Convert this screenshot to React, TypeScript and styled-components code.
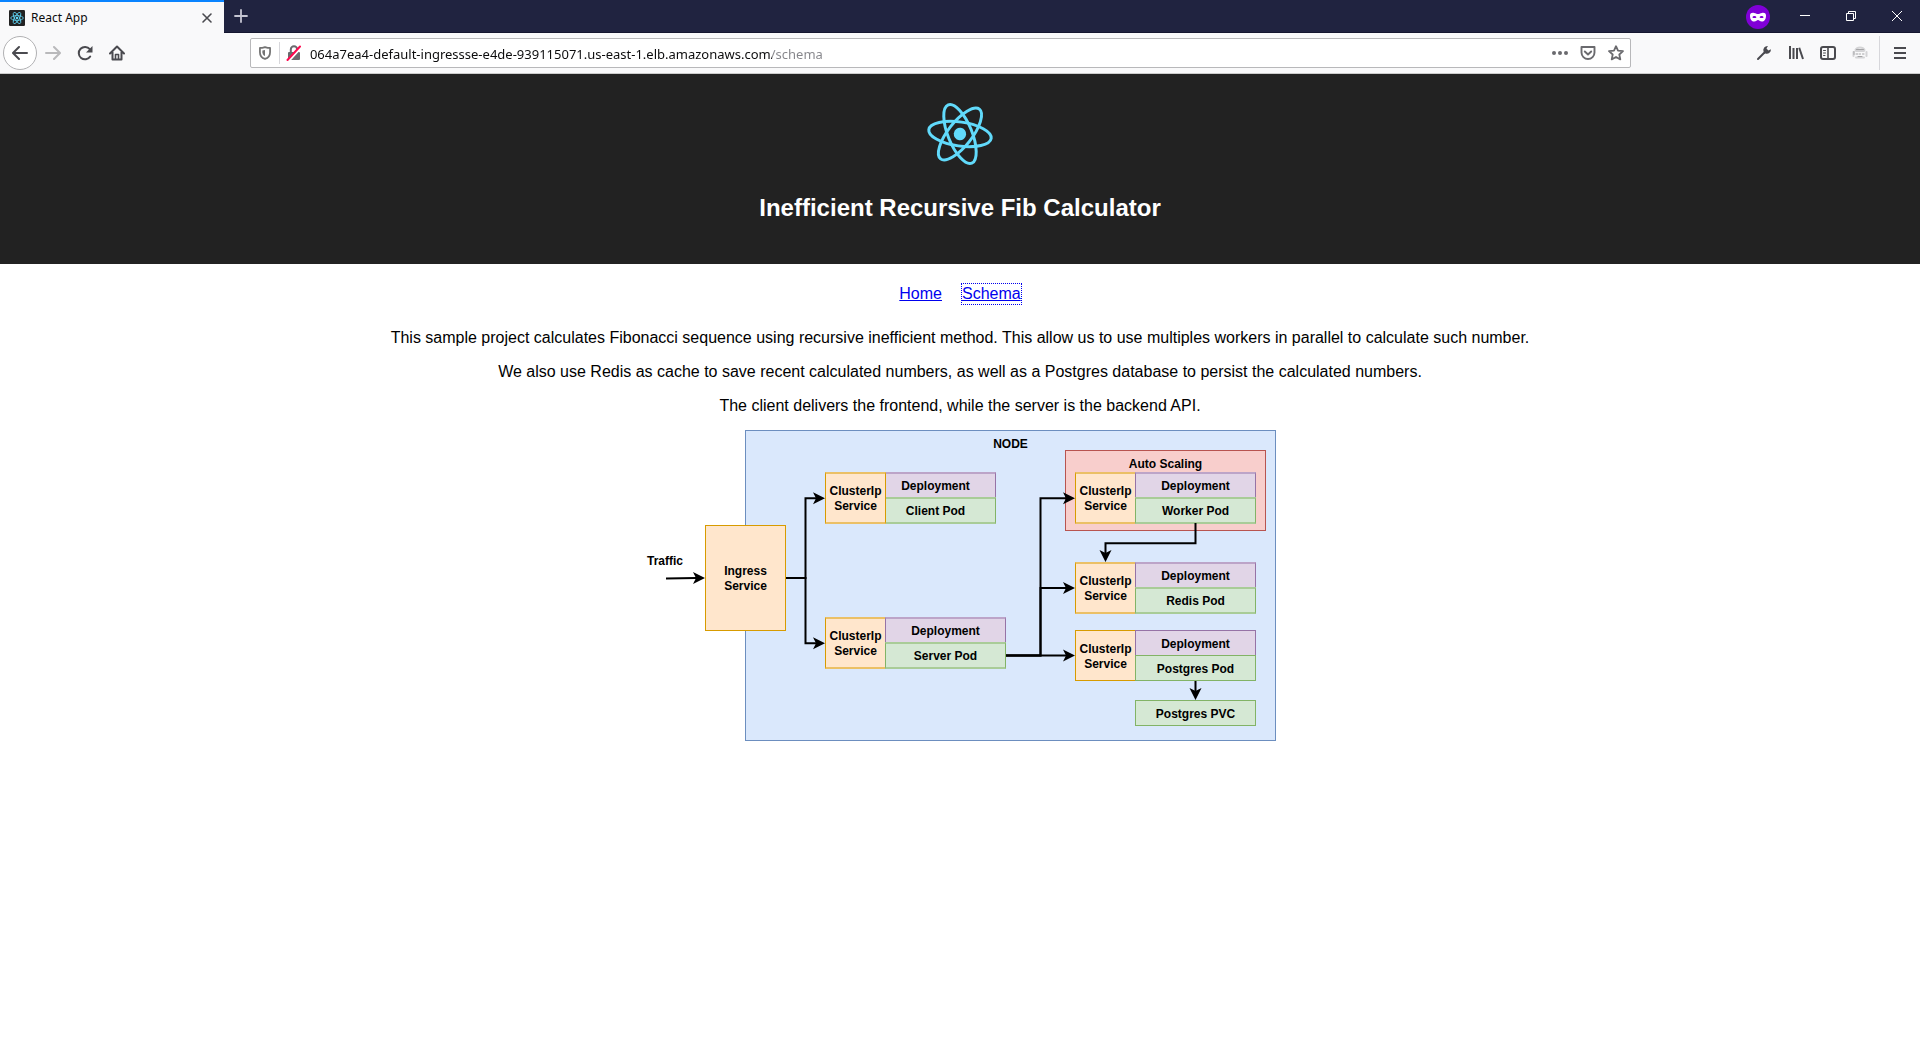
import React from "react";
import styled, { createGlobalStyle, css } from "styled-components";

const GlobalStyle = createGlobalStyle`
  * { box-sizing: border-box; }
  body {
    margin: 0;
    background: #fff;
    color: #000;
    font-family: "Liberation Sans", Arial, sans-serif;
    font-size: 16px;
    line-height: 20px;
  }
  button { border: 0; padding: 0; background: none; color: inherit; font: inherit; }
`;

/* ---------- browser chrome ---------- */

const Chrome = styled.div`
  font-family: "Noto Sans", "Open Sans", sans-serif;
  font-size: 12px;
  line-height: 16px;
  color: #0c0c0d;
`;

const TabStrip = styled.div`
  display: flex;
  align-items: stretch;
  height: 33px;
  background: #202340;
  border-bottom: 1px solid #14162f;
  color: #fff;
`;

const Tab = styled.div`
  display: flex;
  align-items: center;
  gap: 6px;
  width: 224px;
  height: 33px;
  padding: 0 9px;
  background: #f9f9fa;
  border-top: 2px solid #0a84ff;
  color: #0c0c0d;
`;

const TabTitle = styled.span`
  flex: 1;
`;

const IconButton = styled.button<{ $w: number; $color?: string }>`
  display: flex;
  align-items: center;
  justify-content: center;
  width: ${(p) => p.$w}px;
  height: 32px;
  color: ${(p) => p.$color ?? "#4a4a4f"};
`;

const RoundButton = styled(IconButton)`
  height: 34px;
  border: 1px solid #b1b1b3;
  border-radius: 50%;
  background: #fff;
`;

const WindowControls = styled.div`
  display: flex;
  align-items: center;
  margin-left: auto;
`;

const PrivateBadge = styled.span`
  display: flex;
  align-items: center;
  justify-content: center;
  width: 24px;
  height: 24px;
  margin: 2px 12px 0 0;
  border-radius: 50%;
  background: #8000d7;
`;

const Toolbar = styled.div`
  display: flex;
  align-items: center;
  height: 41px;
  padding-left: 3px;
  background: #f9f9fa;
  border-bottom: 1px solid #ccc;
`;

const Group = styled.div`
  display: flex;
  align-items: center;
`;

const Spacer = styled.div`
  flex: 5 1 0;
`;

const UrlBar = styled.div`
  flex: 59 1 0;
  display: flex;
  align-items: center;
  height: 30px;
  background: #fff;
  border: 1px solid #b8b8ba;
  border-radius: 2px;
`;

const Divider = styled.span<{ $h: number; $gap?: number }>`
  width: 1px;
  height: ${(p) => p.$h}px;
  margin-left: ${(p) => p.$gap ?? 0}px;
  background: #d7d7db;
`;

const UrlInput = styled.input`
  flex: 1;
  min-width: 0;
  padding: 2px 0 0 2px;
  border: 0;
  outline: 0;
  font: inherit;
  font-size: 13px;
  color: transparent;
  background: linear-gradient(to right, #0c0c0d 464px, #85858a 464px);
  -webkit-background-clip: text;
  background-clip: text;
`;

/* ---------- page ---------- */

const Header = styled.header`
  display: flex;
  flex-direction: column;
  align-items: center;
  min-height: 190px;
  padding: 20px;
  background: #222;
  color: #fff;
`;

const Title = styled.h2`
  margin: 20px 0;
  font-size: 24px;
  line-height: 28px;
`;

const Nav = styled.nav`
  display: flex;
  justify-content: center;
  gap: 20px;
  padding: 20px 0 10px;
`;

const NavLink = styled.a<{ $focused?: boolean }>`
  color: #0000ee;
  ${(p) => p.$focused && css`outline: 1px dotted #0000ee;`}
`;

const Intro = styled.section`
  text-align: center;
`;

const Paragraph = styled.p`
  margin: 14px 0;
`;

/* ---------- diagram ---------- */

const Diagram = styled.figure`
  position: relative;
  width: 632px;
  height: 311px;
  margin: 0 auto;
  font-size: 12px;
  font-weight: 700;
  line-height: 15px;
`;

const tones = {
  blue: ["#dae8fc", "#6c8ebf", "#6c8ebf"],
  red: ["#f8cecc", "#b85450", "#b85450"],
  orange: ["#ffe6cc", "#d79b00", "#ebc066"],
  purple: ["#e1d5e7", "#9673a6", "#bca4c8"],
  green: ["#d5e8d4", "#82b366", "#a9cc98"],
};

type Box = { $x: number; $y: number; $w: number; $h: number };

const Node = styled.div<Box & { $tone: keyof typeof tones; $soft?: boolean; $top?: boolean }>`
  position: absolute;
  left: ${(p) => p.$x}px;
  top: ${(p) => p.$y}px;
  width: ${(p) => p.$w}px;
  height: ${(p) => p.$h}px;
  display: flex;
  justify-content: center;
  align-items: ${(p) => (p.$top ? "flex-start" : "center")};
  padding-top: ${(p) => (p.$top ? 6 : 2)}px;
  text-align: center;
  background: ${(p) => tones[p.$tone][0]};
  border: 1px solid ${(p) => tones[p.$tone][1]};
  ${(p) => p.$soft && css`
    border-top: 2px solid ${tones[p.$tone][2]};
    border-bottom: 2px solid ${tones[p.$tone][2]};
  `}
`;

const TrafficLabel = styled.figcaption`
  position: absolute;
  left: 3px;
  top: 124px;
`;

const Edges = styled.svg`
  position: absolute;
  inset: 0;
`;

type UnitProps = { x: number; y: number; pod: string; soft?: boolean; under?: boolean };

function Unit({ x, y, pod, soft, under }: UnitProps) {
  const cluster = (
    <Node $x={x} $y={y} $w={61} $h={soft ? 52 : 51} $tone="orange" $soft={soft}>
      ClusterIp
      <br />
      Service
    </Node>
  );
  const left = under ? x + 50 : x + 60;
  return (
    <>
      {!under && cluster}
      <Node $x={left} $y={y} $w={121} $h={soft ? 27 : 26} $tone="purple" $soft={soft}>Deployment</Node>
      <Node $x={left} $y={y + 25} $w={121} $h={soft ? 27 : 26} $tone="green" $soft={soft}>{pod}</Node>
      {under && cluster}
    </>
  );
}

const arrowRight = (x: number, y: number) => `M${x} ${y}l-12 -6l3 6l-3 6z`;
const arrowDown = (x: number, y: number) => `M${x} ${y}l-6 -12l6 3l6 -3z`;

function Architecture() {
  return (
    <Diagram>
      <Node $x={101} $y={0} $w={531} $h={311} $tone="blue" $top>NODE</Node>
      <Node $x={421} $y={20} $w={201} $h={81} $tone="red" $top>Auto Scaling</Node>
      <Node $x={61} $y={95} $w={81} $h={106} $tone="orange">
        Ingress
        <br />
        Service
      </Node>
      <Unit x={181} y={42} pod="Client Pod" soft under />
      <Unit x={181} y={187} pod="Server Pod" soft />
      <Unit x={431} y={42} pod="Worker Pod" soft />
      <Unit x={431} y={132} pod="Redis Pod" soft />
      <Unit x={431} y={200} pod="Postgres Pod" />
      <Node $x={491} $y={270} $w={121} $h={26} $tone="green">Postgres PVC</Node>
      <TrafficLabel>Traffic</TrafficLabel>
      <Edges width="632" height="311" viewBox="0 0 632 311" aria-hidden="true">
        <g fill="none" stroke="#000" strokeWidth="2">
          <path d="M22 148.5L52 148" />
          <path d="M142 148H161.5V68.3H172" />
          <path d="M142 148H161.5V213.3H172" />
          <path d="M362 225.5H422" />
          <path d="M362 225.5H396.5V68.3H422" />
          <path d="M362 225.5H396.5V158H422" />
          <path d="M551.5 93V113.3H461.5V123" />
          <path d="M551.5 251V261" />
        </g>
        <path
          d={[
            arrowRight(61, 148),
            arrowRight(181, 68.3),
            arrowRight(181, 213.3),
            arrowRight(431, 68.3),
            arrowRight(431, 158),
            arrowRight(431, 225.5),
            arrowDown(461.5, 132),
            arrowDown(551.5, 270),
          ].join("")}
        />
      </Edges>
    </Diagram>
  );
}

/* ---------- icons ---------- */

function Icon({ children, size = 16 }: { children: React.ReactNode; size?: number }) {
  return (
    <svg width={size} height={size} viewBox="0 0 16 16" fill="none" stroke="currentColor" strokeWidth="2" strokeLinecap="round" strokeLinejoin="round" aria-hidden="true">
      {children}
    </svg>
  );
}

function Atom({ tilt = 0, weight }: { tilt?: number; weight: number }) {
  return (
    <g transform={`rotate(${tilt})`} fill="none" stroke="#61dafb" strokeWidth={weight}>
      <circle r="6.2" fill="#61dafb" stroke="none" />
      {[0, 60, 120].map((a) => (
        <ellipse key={a} rx="31.5" ry="12" transform={`rotate(${a})`} />
      ))}
    </g>
  );
}

export default function App() {
  return (
    <>
      <GlobalStyle />
      <Chrome>
        <TabStrip>
          <Tab>
            <svg width="16" height="16" viewBox="-40 -40 80 80" aria-hidden="true">
              <rect x="-40" y="-40" width="80" height="80" rx="6" fill="#222" />
              <Atom weight={4} />
            </svg>
            <TabTitle>React App</TabTitle>
            <IconButton $w={16} aria-label="Close tab">
              <Icon><path d="M4 4l8 8M12 4l-8 8" strokeWidth="1.6" /></Icon>
            </IconButton>
          </Tab>
          <IconButton $w={34} $color="#c5c5d2" aria-label="New tab">
            <Icon><path d="M8 2v12M2 8h12" strokeWidth="1.8" /></Icon>
          </IconButton>
          <WindowControls>
            <PrivateBadge>
              <svg width="16" height="16" viewBox="0 0 16 16" aria-hidden="true">
                <path fill="#fff" fillRule="evenodd" d="M0 6.5C0 4 2 3.6 4 3.9C6 4.1 7 5 8 5s2-.9 4-1.100c2-.3 4 .1 4 2.6c0 4-1.800 6-4.200 6C9.700 12.500 9.200 11 8 11s-1.700 1.500-3.800 1.500C1.800 12.500 0 10.500 0 6.500zM2.300 8.200C3.200 9.300 5.500 9.500 6.500 8.200C5.500 6.500 3.200 6.700 2.300 8.200zM13.700 8.200C12.800 6.700 10.500 6.500 9.500 8.200C10.500 9.500 12.800 9.300 13.700 8.200z" />
              </svg>
            </PrivateBadge>
            <IconButton $w={46} $color="#fff" aria-label="Minimize">
              <svg width="10" height="10" aria-hidden="true"><path d="M0 4.500h10" stroke="currentColor" /></svg>
            </IconButton>
            <IconButton $w={46} $color="#fff" aria-label="Restore">
              <svg width="10" height="10" fill="none" stroke="currentColor" aria-hidden="true"><path d="M.5 2.500h7v7h-7zM2.500 2.500v-2h7v7h-2" /></svg>
            </IconButton>
            <IconButton $w={46} $color="#fff" aria-label="Close window">
              <svg width="10" height="10" stroke="currentColor" aria-hidden="true"><path d="M0 0l10 10M10 0L0 10" /></svg>
            </IconButton>
          </WindowControls>
        </TabStrip>
        <Toolbar>
          <Group>
            <RoundButton $w={34} aria-label="Back">
              <Icon><path d="M15 8H1.500M7 2L1 8l6 6" /></Icon>
            </RoundButton>
            <IconButton $w={32} $color="#b9b9bb" aria-label="Forward">
              <Icon><path d="M1 8h13.500M9 2l6 6l-6 6" /></Icon>
            </IconButton>
            <IconButton $w={32} aria-label="Reload">
              <Icon>
                <path d="M13.200 11.500A6.200 6.200 0 1 1 12.800 4.200" />
                <path d="M15.500 1v6.500H9z" fill="currentColor" stroke="none" />
              </Icon>
            </IconButton>
            <IconButton $w={32} aria-label="Home">
              <Icon>
                <path d="M1 8.500L8 1.500l7 7M3.500 7v7.500h9V7" />
                <path d="M6.500 14V9.500h3V14" strokeWidth="1.600" />
              </Icon>
            </IconButton>
          </Group>
          <Spacer />
          <UrlBar>
            <IconButton $w={28} $color="#737373" aria-label="Tracking protection">
              <Icon size={14}>
                <path d="M8 1.200C6 1.800 3.700 2.200 2.200 2.200V7c0 4 2.800 6.800 5.800 7.800c3-1 5.800-3.800 5.800-7.800V2.200C12.300 2.200 10 1.800 8 1.200z" />
                <path d="M8 4.500v7C6 10.500 5 8.500 5 7V5z" fill="currentColor" stroke="none" />
              </Icon>
            </IconButton>
            <Divider $h={22} />
            <IconButton $w={28} $color="#6a6a6e" aria-label="Connection is not secure">
              <Icon>
                <rect x="2" y="7" width="12" height="8" rx="1" fill="currentColor" stroke="none" />
                <path d="M4.800 7V4.500a3.200 3.200 0 0 1 6.400 0V7" />
                <path d="M3 15.500L15.500 2" stroke="#fff" strokeWidth="2.500" />
                <path d="M1.500 15L14 1.500" stroke="#ff0a50" strokeWidth="2" />
              </Icon>
            </IconButton>
            <UrlInput aria-label="Address" defaultValue="064a7ea4-default-ingressse-e4de-939115071.us-east-1.elb.amazonaws.com/schema" />
            <IconButton $w={28} $color="#6a6a6e" aria-label="Page actions">
              <svg width="16" height="16" fill="currentColor" aria-hidden="true"><circle cx="2" cy="8" r="2" /><circle cx="8" cy="8" r="2" /><circle cx="14" cy="8" r="2" /></svg>
            </IconButton>
            <IconButton $w={28} $color="#6a6a6e" aria-label="Save to Pocket">
              <Icon><path d="M1.500 2h13v5.500a6.500 6.500 0 0 1-13 0zM4.800 6.500L8 9.500l3.200-3" strokeWidth="1.900" /></Icon>
            </IconButton>
            <IconButton $w={28} $color="#6a6a6e" aria-label="Bookmark">
              <Icon><path d="M8 1.200l2 4.500l5 .5l-3.700 3.300l1 4.900L8 12l-4.300 2.400l1-4.900L1 6.200l5-.5z" strokeWidth="1.800" /></Icon>
            </IconButton>
          </UrlBar>
          <Spacer />
          <Group>
            <IconButton $w={32} aria-label="Developer tools">
              <Icon>
                <path d="M2 14l6.500-6.500" strokeWidth="2" />
                <path d="M14.900 4.200l-2.500 1.300l-1.900-1.900L11.900 1A4.200 4.200 0 0 0 7.500 6.500l2.200 2.200A4.200 4.200 0 0 0 14.900 4.200z" fill="currentColor" stroke="none" />
              </Icon>
            </IconButton>
            <IconButton $w={32} aria-label="Library">
              <Icon><path d="M2 1v13M5.500 3v11M9 3v11M11.200 2.800L15 14" strokeLinecap="butt" /></Icon>
            </IconButton>
            <IconButton $w={32} aria-label="Sidebars">
              <Icon>
                <rect x="1" y="2" width="14" height="12" rx="2" />
                <path d="M8 2v12" strokeWidth="1.600" />
                <path d="M3.500 5.500h2M3.500 8h2M3.500 10.500h1.500" strokeWidth="1" />
              </Icon>
            </IconButton>
            <IconButton $w={32} $color="#d4d4d6" aria-label="Extension">
              <Icon>
                <path d="M3.500 5C5 1.500 11 1.500 12.500 5M1.500 7v4M14.500 7v4M4 6h8M4 12.500h8" />
                <path d="M4.500 4.500h7M4 9h2M7.500 9h1M10.500 9H12M6 11.500h4M2 6.500v3" stroke="#a4a4a6" strokeWidth="1" />
              </Icon>
            </IconButton>
            <Divider $h={34} $gap={3} />
            <IconButton $w={40} aria-label="Menu">
              <Icon><path d="M2 3h12M2 8h12M2 13h12" strokeLinecap="butt" /></Icon>
            </IconButton>
          </Group>
        </Toolbar>
      </Chrome>
      <Header>
        <svg width="113" height="80" viewBox="-56 -40 113 80" aria-label="React logo" role="img">
          <Atom tilt={8} weight={3} />
        </svg>
        <Title>Inefficient Recursive Fib Calculator</Title>
      </Header>
      <main>
        <Nav>
          <NavLink href="/">Home</NavLink>
          <NavLink href="/schema" $focused>Schema</NavLink>
        </Nav>
        <Intro>
          <Paragraph>This sample project calculates Fibonacci sequence using recursive inefficient method. This allow us to use multiples workers in parallel to calculate such number.</Paragraph>
          <Paragraph>We also use Redis as cache to save recent calculated numbers, as well as a Postgres database to persist the calculated numbers.</Paragraph>
          <Paragraph>The client delivers the frontend, while the server is the backend API.</Paragraph>
        </Intro>
        <Architecture />
      </main>
    </>
  );
}
